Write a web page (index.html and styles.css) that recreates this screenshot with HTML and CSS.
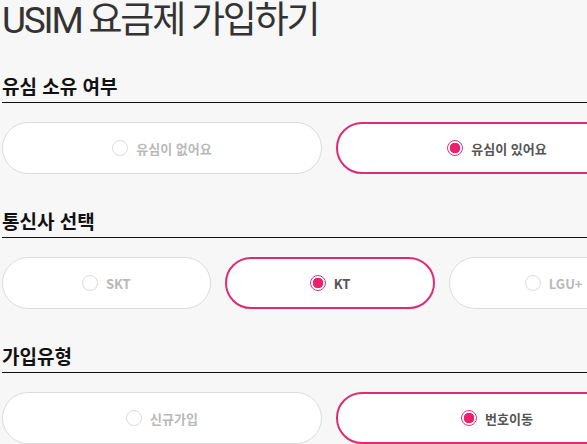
FILE: index.html
```html
<!DOCTYPE html>
<html lang="ko">
<head>
<meta charset="utf-8">
<link rel="stylesheet" href="styles.css">
</head>
<body>
<div class="page">
  <h1 class="title">USIM 요금제 가입하기</h1>

  <section class="group">
    <h2 class="group-title">유심 소유 여부</h2>
    <div class="options">
      <label class="option"><span class="radio"></span><span class="label">유심이 없어요</span></label>
      <label class="option is-selected"><span class="radio"></span><span class="label">유심이 있어요</span></label>
    </div>
  </section>

  <section class="group">
    <h2 class="group-title">통신사 선택</h2>
    <div class="options">
      <label class="option"><span class="radio"></span><span class="label">SKT</span></label>
      <label class="option is-selected"><span class="radio"></span><span class="label">KT</span></label>
      <label class="option"><span class="radio"></span><span class="label">LGU+</span></label>
    </div>
  </section>

  <section class="group">
    <h2 class="group-title">가입유형</h2>
    <div class="options">
      <label class="option"><span class="radio"></span><span class="label">신규가입</span></label>
      <label class="option is-selected"><span class="radio"></span><span class="label">번호이동</span></label>
    </div>
  </section>
</div>
</body>
</html>
```
FILE: styles.css
```css
html, body {
  margin: 0;
  padding: 0;
  background: #f7f7f7;
}
body {
  font-family: "Noto Sans CJK KR", "Noto Sans", sans-serif;
  color: #333;
  overflow: hidden;
}
.page {
  width: 656px;
  padding-left: 2px;
}
.title {
  margin: 0;
  padding-top: 2px;
  font-family: Roboto, "Noto Sans CJK KR", sans-serif;
  font-weight: 400;
  font-size: 37px;
  line-height: 38px;
  color: #333;
  letter-spacing: -2.2px;
  white-space: nowrap;
}
.group {
  margin-top: 32px;
}
.group + .group {
  margin-top: 33px;
}
.group-title {
  margin: 0;
  font-size: 19px;
  font-weight: 700;
  line-height: 28px;
  color: #111;
  padding-bottom: 2px;
  border-bottom: 1px solid #111;
}
.options {
  display: flex;
  gap: 14px;
  margin-top: 19px;
}
.option {
  flex: 1;
  box-sizing: border-box;
  height: 52px;
  border: 1px solid #dcdcdc;
  border-radius: 26px;
  background: #fff;
  display: flex;
  align-items: center;
  justify-content: center;
  gap: 8px;
  font-size: 13px;
  font-weight: 700;
  color: #b9b9b9;
}
.radio {
  box-sizing: border-box;
  width: 16px;
  height: 16px;
  border: 1px solid #dcdcdc;
  border-radius: 50%;
  background: #fff;
}
.option.is-selected {
  border: 2px solid #de2b72;
  color: #555;
}
.option.is-selected .radio {
  border-color: #e0337a;
  background: radial-gradient(circle, #f01f6e 0 5px, #fff 5.5px);
}
```
